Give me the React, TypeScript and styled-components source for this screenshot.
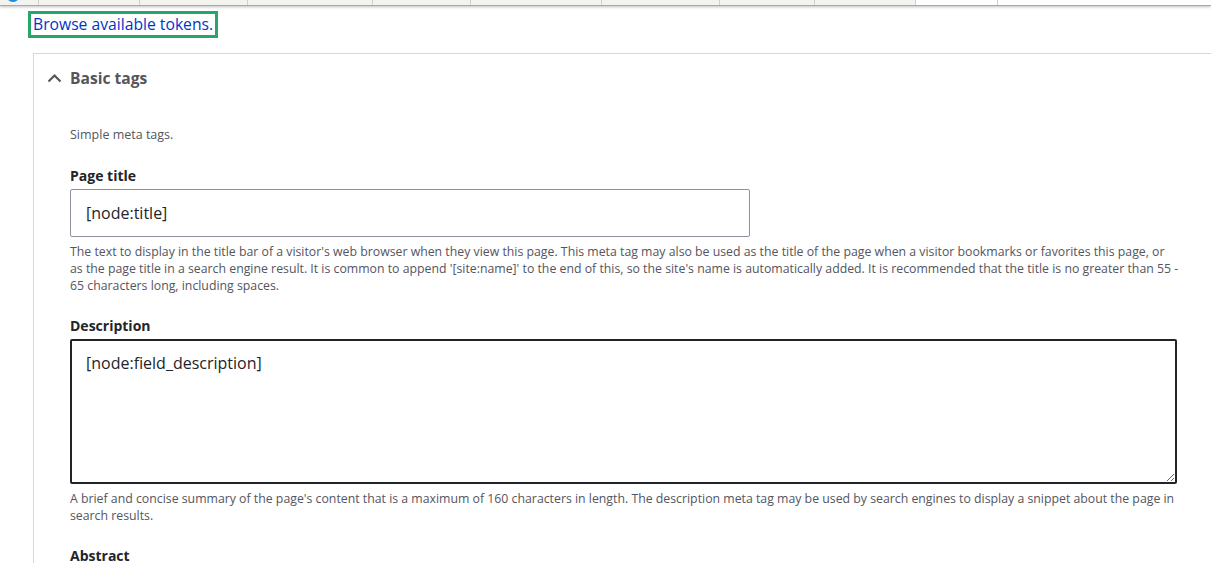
import styled, { createGlobalStyle } from "styled-components";

const GlobalStyle = createGlobalStyle`
  html, body {
    margin: 0;
    padding: 0;
    background: #fff;
  }
  body {
    font-family: "Open Sans", "Noto Sans", sans-serif;
    color: #232429;
    overflow: hidden;
  }
`;

const Page = styled.div`
  width: 1211px;
  height: 563px;
  overflow: hidden;
`;

const TabStrip = styled.div`
  display: flex;
  height: 5px;
  background: #f3f3f0;
  border-bottom: 1px solid #a9a9a9;
  box-shadow: 0 1px 3px rgba(0, 0, 0, 0.25);
  overflow: hidden;
`;

const Tab = styled.div<{ w: number; light?: boolean }>`
  flex: 0 0 ${({ w }) => w}px;
  border-right: 1px solid #cfcfcb;
  background: ${({ light }) => (light ? "#fff" : "transparent")};
  display: flex;
  justify-content: center;
`;

const Spacer = styled.div`
  flex: 1;
  background: #fff;
`;

const Logo = styled.span`
  width: 14px;
  height: 14px;
  border-radius: 50%;
  background: #1b8ee0;
  margin-top: -12px;
  margin-left: -12px;
`;

const Main = styled.div`
  display: flex;
  flex-direction: column;
  align-items: flex-start;
  padding: 5px 0 0 28px;
`;

const TokenLink = styled.a`
  display: block;
  font-size: 15.7px;
  line-height: 21px;
  color: #0036c8;
  text-decoration: none;
  padding: 0 2px;
  border: 3px solid #26a769;
`;

const Details = styled.div`
  align-self: stretch;
  margin: 15px 0 0 5px;
  border: 1px solid #d6d6db;
  border-right: none;
  border-bottom: none;
`;

const Summary = styled.div`
  display: flex;
  align-items: center;
  gap: 8px;
  padding: 9px 14px 0 13px;
  height: 30px;
  font-size: 15.6px;
  font-weight: 700;
  color: #55565b;
`;

const Chevron = styled.svg`
  width: 15px;
  height: 10px;
  flex: none;
`;

const Body = styled.div`
  padding: 16px 34px 0 36px;
`;

const Intro = styled.p`
  margin: 0 0 24px;
  padding-top: 17px;
  font-size: 12.5px;
  line-height: 17px;
  color: #55565b;
`;

const FormItem = styled.div`
  margin-bottom: 23px;
`;

const Label = styled.label`
  display: block;
  font-size: 14px;
  line-height: 18px;
  font-weight: 700;
  color: #232429;
  margin-bottom: 4px;
`;

const TextInput = styled.input`
  box-sizing: border-box;
  display: block;
  width: 680px;
  height: 48px;
  padding: 0 15px;
  border: 1px solid #8e929c;
  border-radius: 2px;
  font-family: inherit;
  font-size: 16px;
  color: #232429;
  background: #fff;
  outline: none;
`;

const TextArea = styled.textarea`
  box-sizing: border-box;
  display: block;
  width: 1107px;
  height: 145px;
  padding: 10px 14px;
  border: 2px solid #232429;
  border-radius: 2px;
  font-family: inherit;
  font-size: 16px;
  line-height: 24px;
  color: #232429;
  background: #fff;
  outline: none;
`;

const Help = styled.div`
  margin-top: 6px;
  width: 1110px;
  font-size: 12.3px;
  line-height: 17px;
  color: #545560;
`;

export default function App() {
  const tabs = [38, 100, 107, 124, 97, 130, 117, 94, 100];
  return (
    <Page>
      <GlobalStyle />
      <TabStrip>
        {tabs.map((w, i) => (
          <Tab key={i} w={w}>
            {i === 0 ? <Logo /> : null}
          </Tab>
        ))}
        <Tab w={81} light />
        <Spacer />
      </TabStrip>
      <Main>
        <TokenLink href="#">Browse available tokens.</TokenLink>
        <Details>
          <Summary>
            <Chevron viewBox="0 0 15 10">
              <path
                d="M1.5 8.5 L7.5 2.5 L13.5 8.5"
                fill="none"
                stroke="#55565b"
                strokeWidth="2.2"
              />
            </Chevron>
            Basic tags
          </Summary>
          <Body>
            <Intro>Simple meta tags.</Intro>
            <FormItem>
              <Label>Page title</Label>
              <TextInput readOnly value="[node:title]" />
              <Help>
                The text to display in the title bar of a visitor's web browser
                when they view this page. This meta tag may also be used as the
                title of the page when a visitor bookmarks or favorites this
                page, or as the page title in a search engine result. It is
                common to append '[site:name]' to the end of this, so the site's
                name is automatically added. It is recommended that the title is
                no greater than 55 - 65 characters long, including spaces.
              </Help>
            </FormItem>
            <FormItem>
              <Label>Description</Label>
              <TextArea readOnly value="[node:field_description]" />
              <Help>
                A brief and concise summary of the page's content that is a
                maximum of 160 characters in length. The description meta tag
                may be used by search engines to display a snippet about the
                page in search results.
              </Help>
            </FormItem>
            <FormItem>
              <Label>Abstract</Label>
            </FormItem>
          </Body>
        </Details>
      </Main>
    </Page>
  );
}
